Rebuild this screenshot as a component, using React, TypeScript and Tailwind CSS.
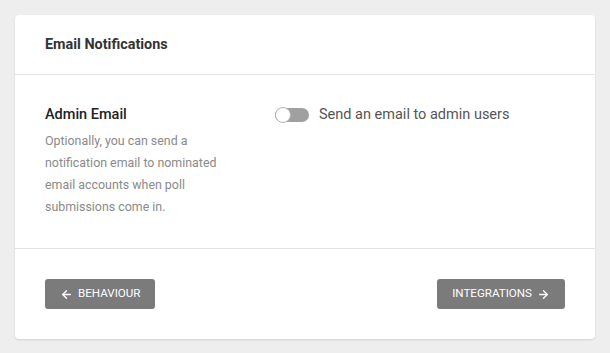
import { ArrowLeft, ArrowRight } from 'lucide-react';

function NavButton({ label, dir }: { label: string; dir: 'back' | 'next' }) {
  return (
    <button
      type="button"
      className="flex items-center gap-[5px] h-[30px] px-[15px] rounded-[3px] bg-[#7b7b7b] text-white text-[11.6px] font-normal uppercase"
    >
      {dir === 'back' && <ArrowLeft size={13} strokeWidth={2.5} />}
      <span>{label}</span>
      {dir === 'next' && <ArrowRight size={13} strokeWidth={2.5} />}
    </button>
  );
}

export default function App() {
  return (
    <div
      className="min-h-[353px] w-full bg-[#eeeeee] p-[15px]"
      style={{ fontFamily: 'Roboto, "Liberation Sans", sans-serif' }}
    >
      <div className="bg-white rounded-[4px] shadow-[0_1px_2px_rgba(0,0,0,0.12)]">
        {/* Header */}
        <div className="h-[60px] flex items-center px-[30px] pt-px border-b border-[#e2e2e2]">
          <h2 className="text-[14.4px] font-bold text-[#333]">Email Notifications</h2>
        </div>

        {/* Admin email setting */}
        <div className="flex gap-[30px] px-[30px] py-[30px] border-b border-[#e2e2e2]">
          <div className="w-[200px]">
            <div className="text-[14.5px] leading-[20px] font-medium text-[#222] mb-[5px]">Admin Email</div>
            <p className="text-[12.4px] leading-[22px] text-[#8a8a8a]">
              Optionally, you can send a notification email to nominated email accounts when poll
              submissions come in.
            </p>
          </div>
          <label className="flex items-center h-[20px] gap-[10px] text-[14.5px] text-[#555]">
            <span className="relative w-[34px] h-[14px] rounded-full bg-[#a0a0a0]">
              <span className="absolute left-0 top-[-1px] w-[16px] h-[16px] rounded-full bg-white border border-[#b5b5b5]" />
            </span>
            Send an email to admin users
          </label>
        </div>

        {/* Footer */}
        <div className="flex justify-between px-[30px] py-[30px]">
          <NavButton label="Behaviour" dir="back" />
          <NavButton label="Integrations" dir="next" />
        </div>
      </div>
    </div>
  );
}
